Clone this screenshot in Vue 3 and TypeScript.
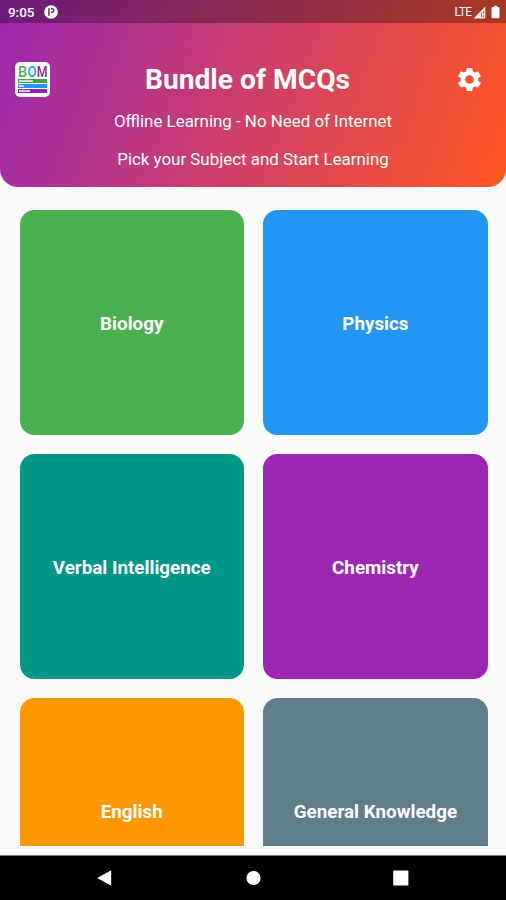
<script setup lang="ts">
interface Subject {
  name: string
  tone: string
}

const subjects: Subject[] = [
  { name: 'Biology', tone: 'green' },
  { name: 'Physics', tone: 'blue' },
  { name: 'Verbal Intelligence', tone: 'teal' },
  { name: 'Chemistry', tone: 'purple' },
  { name: 'English', tone: 'orange' },
  { name: 'General Knowledge', tone: 'slate' },
]
</script>

<template>
  <div class="screen">
    <header class="header">
      <div class="status">
        <span class="clock">9:05</span>
        <svg class="notice" viewBox="0 0 14 14" width="14" height="14">
          <circle cx="7" cy="7" r="6.8" fill="#fff" />
          <path d="M4.9 3.2v7.6M6.9 3.8h1.2a1.7 1.7 0 0 1 0 3.4H6.9" fill="none" stroke="#6f2466" stroke-width="1.5" />
        </svg>
        <span class="network">LTE</span>
        <svg class="signal" viewBox="0 0 13 13" width="13" height="13">
          <path d="M12.3.6V12.4H.5z" fill="#fff" fill-opacity=".92" />
          <path d="M8.6 6.2v4.9M10.6 5v2.6M10.6 9.2v1.8" stroke="#a6382e" stroke-width=".8" />
        </svg>
        <svg class="battery" viewBox="0 0 9 14" width="9" height="14">
          <path d="M3 .8h3v1.2h1.3q1.2 0 1.2 1.2v8.8q0 1.2-1.2 1.2H1.7Q.5 13.2.5 12V3.2q0-1.2 1.2-1.2H3z" fill="#fff" />
        </svg>
      </div>
      <div class="bar">
        <div class="logo">
          <div class="letters"><span class="b">B</span><span class="o">O</span><span class="m">M</span></div>
          <div class="stripe stripe-green"><i></i></div>
          <div class="stripe stripe-blue"><i></i></div>
          <div class="stripe stripe-purple"><i></i></div>
        </div>
        <h1>Bundle of MCQs</h1>
        <svg class="gear" viewBox="0 0 24 24" width="29" height="29">
          <path fill="#fff" d="M19.14 12.94c.04-.3.06-.61.06-.94 0-.32-.02-.64-.07-.94l2.03-1.58c.18-.14.23-.41.12-.61l-1.92-3.32c-.12-.22-.37-.29-.59-.22l-2.39.96c-.5-.38-1.03-.7-1.62-.94l-.36-2.54c-.04-.24-.24-.41-.48-.41h-3.84c-.24 0-.43.17-.47.41l-.36 2.54c-.59.24-1.13.57-1.62.94l-2.39-.96c-.22-.08-.47 0-.59.22L2.74 8.87c-.12.21-.08.47.12.61l2.03 1.58c-.05.3-.09.63-.09.94s.02.64.07.94l-2.03 1.58c-.18.14-.23.41-.12.61l1.92 3.32c.12.22.37.29.59.22l2.39-.96c.5.38 1.03.7 1.62.94l.36 2.54c.05.24.24.41.48.41h3.84c.24 0 .44-.17.47-.41l.36-2.54c.59-.24 1.13-.56 1.62-.94l2.39.96c.22.08.47 0 .59-.22l1.92-3.32c.12-.22.07-.47-.12-.61l-2.01-1.58zM12 15.6c-1.98 0-3.6-1.62-3.6-3.6s1.62-3.6 3.6-3.6 3.6 1.62 3.6 3.6-1.62 3.6-3.6 3.6z" />
        </svg>
      </div>
      <p>Offline Learning - No Need of Internet</p>
      <p>Pick your Subject and Start Learning</p>
    </header>

    <main class="grid">
      <div v-for="s in subjects" :key="s.name" class="card" :class="s.tone">{{ s.name }}</div>
    </main>

    <nav class="nav">
      <svg viewBox="0 0 16 18" width="16" height="18"><path d="M14.2 1.2v15.6L.2 9z" fill="#fff" /></svg>
      <svg viewBox="0 0 16 16" width="16" height="16"><circle cx="8.5" cy="8" r="7.1" fill="#fff" /></svg>
      <svg viewBox="0 0 16 16" width="16" height="16"><rect x=".2" y=".4" width="15.2" height="15.2" rx="1.2" fill="#fff" /></svg>
    </nav>
  </div>
</template>

<style>
body {
  margin: 0;
}
</style>

<style scoped>
.screen {
  width: 506px;
  height: 900px;
  display: flex;
  flex-direction: column;
  overflow: hidden;
  background: #fafafa;
  color: #fff;
  font-family: Roboto, sans-serif;
}
.header {
  box-sizing: border-box;
  height: 187.4px;
  flex: none;
  overflow: hidden;
  border-radius: 0 0 18px 18px;
  background: linear-gradient(110.3deg, #9c27b0, #ff5722);
}
.status {
  box-sizing: border-box;
  height: 23px;
  padding: 1px 6px 0 8px;
  display: flex;
  align-items: center;
  background: rgba(0, 0, 0, 0.3);
}
.clock {
  width: 35.5px;
  font-size: 13.4px;
  font-weight: 500;
}
.network {
  margin-left: auto;
  font-size: 12px;
  letter-spacing: -0.6px;
}
.signal {
  margin-left: 1.5px;
}
.battery {
  margin-left: 5px;
}
.bar {
  height: 78px;
  padding: 34px 22px 0 15px;
  box-sizing: border-box;
  display: flex;
  align-items: center;
}
.logo {
  box-sizing: border-box;
  width: 35px;
  height: 35px;
  padding: 3px 3px 0 3px;
  border-radius: 5px;
  background: #fff;
}
.letters {
  height: 14px;
  display: flex;
  justify-content: space-between;
  font-size: 14.5px;
  line-height: 15px;
  font-weight: 500;
}
.letters span {
  flex: none;
}
.b {
  width: 9px;
  color: #4caf50;
}
.o {
  width: 8.5px;
  margin-left: -0.5px;
  color: #2196f3;
  transform: scaleX(0.9);
}
.m {
  width: 11.5px;
  color: #8e24aa;
  transform: scaleX(0.85);
}
.stripe {
  height: 4px;
  margin-bottom: 1px;
  display: flex;
  align-items: center;
}
.stripe i {
  height: 2px;
  margin-left: 1px;
  background: rgba(255, 255, 255, 0.7);
}
.stripe-green {
  background: #43a047;
}
.stripe-green i {
  width: 14px;
}
.stripe-blue {
  background: #2196f3;
}
.stripe-blue i {
  width: 5px;
}
.stripe-purple {
  background: #8e24aa;
}
.stripe-purple i {
  width: 11px;
}
h1 {
  flex: 1;
  margin: 2px 10px 0 0;
  text-align: center;
  font-size: 28.2px;
  line-height: 34px;
  font-weight: 700;
}
p {
  margin: 0 0 18px;
  height: 20px;
  text-align: center;
  font-size: 16.9px;
  line-height: 40px;
}
.grid {
  box-sizing: border-box;
  height: 658.6px;
  flex: none;
  overflow: hidden;
  padding: 23px 18px 0 19.5px;
  display: grid;
  grid-template-columns: 224.5px 224.5px;
  grid-auto-rows: 224.4px;
  gap: 19.4px 19.2px;
  align-content: start;
}
.card {
  display: flex;
  align-items: center;
  justify-content: center;
  border-radius: 14.5px;
  padding-top: 3px;
  box-sizing: border-box;
  font-size: 18.8px;
  font-weight: 700;
}
.green {
  background: #4caf50;
}
.blue {
  background: #2196f3;
}
.teal {
  background: #009688;
}
.purple {
  background: #9c27b0;
}
.orange {
  background: #ff9800;
}
.slate {
  background: #607d8b;
}
.nav {
  box-sizing: border-box;
  height: 45px;
  margin-top: auto;
  padding: 0 97px;
  display: flex;
  align-items: center;
  justify-content: space-between;
  border-top: 1px solid #777;
  background: #000;
}
</style>
